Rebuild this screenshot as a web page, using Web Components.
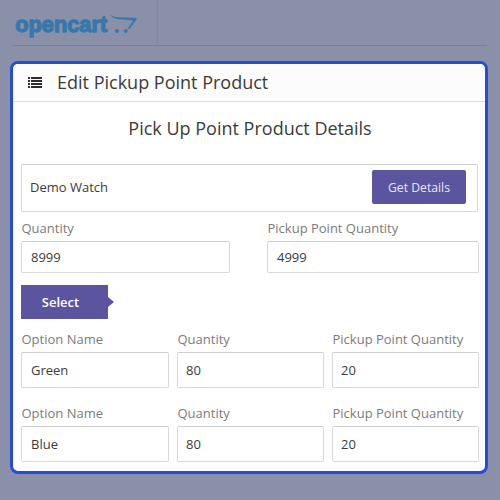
<!DOCTYPE html>
<html lang="en">
<head>
<meta charset="utf-8">
<title>Edit Pickup Point Product</title>
<style>
body {
  margin: 0;
  width: 500px;
  height: 500px;
  overflow: hidden;
  background-color: #8990a8;
  font-family: "Open Sans", "Noto Sans", sans-serif;
  color: #3b3b3b;
}
</style>
</head>
<body>

<store-header></store-header>
<edit-panel>
  <span slot="heading">Edit Pickup Point Product</span>
  <panel-title>Pick Up Point Product Details</panel-title>
  <product-picker action="Get Details">Demo Watch</product-picker>
  <field-row style="--columns: 209px 212px; --gap: 37px; --box: 32px; --top: 6px;">
    <form-field label="Quantity">8999</form-field>
    <form-field label="Pickup Point Quantity">4999</form-field>
  </field-row>
  <select-tag>Select</select-tag>
  <field-row style="--columns: 148px 147px 147px; --gap: 8px; --box: 36px; --top: 10px;">
    <form-field label="Option Name">Green</form-field>
    <form-field label="Quantity" style="--indent: 8px;">80</form-field>
    <form-field label="Pickup Point Quantity" style="--indent: 8px;">20</form-field>
  </field-row>
  <field-row style="--columns: 148px 147px 147px; --gap: 8px; --box: 36px; --top: 15px;">
    <form-field label="Option Name">Blue</form-field>
    <form-field label="Quantity" style="--indent: 8px;">80</form-field>
    <form-field label="Pickup Point Quantity" style="--indent: 8px;">20</form-field>
  </field-row>
</edit-panel>

<script>
function define(name, html) {
  const template = document.createElement("template");
  template.innerHTML = html;
  customElements.define(name, class extends HTMLElement {
    constructor() {
      super();
      const shadowRoot = this.attachShadow({ mode: "open" });
      shadowRoot.appendChild(template.content.cloneNode(true));
    }
    connectedCallback() {
      // copy attributes like label="" into the matching [data-attr] node
      this.shadowRoot.querySelectorAll("[data-attr]").forEach((node) => {
        node.textContent = this.getAttribute(node.dataset.attr);
      });
    }
  });
}

define("store-header", `
<style>
:host {
  display: flex;
  box-sizing: border-box;
  height: 46px;
  margin: 0 13px 15px 12px;
  border-bottom: 1px solid #7a819c;
}
.brand {
  width: 145px;
  border-right: 1px solid #8087a0;
}
svg {
  display: block;
}
text {
  font: bold 22px "Liberation Sans", sans-serif;
  fill: #3678ab;
  stroke: #3678ab;
  stroke-width: 1.3;
  stroke-linejoin: round;
}
</style>
<div class="brand">
  <svg width="145" height="45" viewBox="12 0 145 45">
    <text x="15.200" y="31.500" textLength="92" lengthAdjust="spacingAndGlyphs">opencart</text>
    <path d="M111 15.300c2 1.500 5 2.100 9 2.300l15.500.5c1.100 0 1.300.900.700 1.700l-6.800 9.100-1.400-1 4.700-6.100c.8-1 .4-1.400-1-1.600-9-1-18.900-.4-20.700-4.900z" fill="#3678ab" stroke="#3678ab" stroke-width=".3"/>
    <circle cx="117" cy="31" r="2" fill="#3678ab"/>
    <circle cx="125.700" cy="31" r="2" fill="#3678ab"/>
  </svg>
</div>
`);

define("edit-panel", `
<style>
:host {
  display: block;
  box-sizing: border-box;
  width: 478px;
  height: 413px;
  margin-left: 10px;
  border: 3px solid #274adb;
  border-radius: 8px;
  background-color: #fff;
  overflow: hidden;
}
header {
  display: flex;
  align-items: center;
  box-sizing: border-box;
  height: 38px;
  padding-left: 15px;
  gap: 15px;
  background-color: #fcfcfc;
  border-bottom: 1px solid #dfdfdf;
  font-size: 18px;
}
slot[name="heading"] {
  display: block;
  padding-bottom: 2px;
}
main {
  padding: 0 6px 0 8px;
}
</style>
<header>
  <svg width="14" height="12" viewBox="0 0 14 12" fill="#2d2d2d">
    <path d="M0 0h2v2H0zM0 3h2v2H0zM0 6h2v2H0zM0 9h2v2H0zM3 0h11v2H3zM3 3h11v2H3zM3 6h11v2H3zM3 9h11v2H3z"/>
  </svg>
  <slot name="heading"></slot>
</header>
<main><slot></slot></main>
`);

define("panel-title", `
<style>
:host {
  display: block;
  height: 62px;
  line-height: 53px;
  text-align: center;
  font-size: 18px;
}
</style>
<slot></slot>
`);

define("product-picker", `
<style>
:host {
  display: flex;
  justify-content: space-between;
  box-sizing: border-box;
  width: 457px;
  height: 48px;
  padding: 5px 11px 0 8px;
  border: 1px solid #d9d9d9;
  border-top-color: #cfcfcf;
  border-radius: 2px;
  font-size: 13px;
  line-height: 35px;
}
button {
  width: 94px;
  height: 34px;
  padding: 0;
  border: 0;
  border-radius: 2px;
  background-color: #5b549f;
  color: #e9e7f5;
  font: 12.200px "Open Sans", sans-serif;
}
</style>
<slot></slot>
<button data-attr="action"></button>
`);

define("field-row", `
<style>
:host {
  display: grid;
  grid-template-columns: var(--columns);
  column-gap: var(--gap);
  padding-top: var(--top);
}
</style>
<slot></slot>
`);

define("form-field", `
<style>
:host {
  display: block;
  font-size: 13px;
}
label {
  display: block;
  height: 23px;
  line-height: 20px;
  padding-left: .5px;
  color: #7d7b79;
  white-space: nowrap;
}
.box {
  box-sizing: border-box;
  height: var(--box);
  line-height: calc(var(--box) - 1px);
  padding-left: var(--indent, 9px);
  border: 1px solid #d9d9d9;
  border-top-color: #cfcfcf;
  border-radius: 2px;
}
</style>
<label data-attr="label"></label>
<div class="box"><slot></slot></div>
`);

define("select-tag", `
<style>
:host {
  display: flex;
  align-items: center;
  height: 34px;
  margin-top: 12px;
  color: #fff;
  font-size: 13px;
  font-weight: 600;
}
span {
  width: 87px;
  line-height: 34px;
  padding-right: 8px;
  box-sizing: border-box;
  text-align: center;
  background-color: #5b549f;
}
i {
  border: 5.500px solid transparent;
  border-left: 6.500px solid #5b549f;
  border-right: 0;
}
</style>
<span><slot></slot></span><i></i>
`);
</script>
</body>
</html>
